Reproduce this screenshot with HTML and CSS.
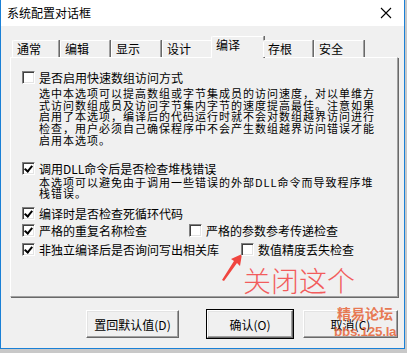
FILE: index.html
```html
<!DOCTYPE html>
<html lang="zh-CN">
<head>
  <meta charset="UTF-8" />
  <title>系统配置对话框</title>
  <link rel="stylesheet" href="styles.css">
</head>
<body>
  <div class="window">
    <div class="titlebar">
      <span class="title">系统配置对话框</span>
      <svg class="close" width="12" height="12" viewBox="0 0 12 12">
        <path d="M1 1 L11 11 M11 1 L1 11" stroke="#000" stroke-width="1.1" fill="none" />
      </svg>
    </div>

    <!-- Tab strip -->
    <div class="tabs">
      <div class="tab first">通常</div>
      <div class="tab">编辑</div>
      <div class="tab">显示</div>
      <div class="tab">设计</div>
      <div class="tab active">编译</div>
      <div class="tab">存根</div>
      <div class="tab">安全</div>
    </div>

    <div class="panel">
      <label class="opt">
        <span class="box"></span>
        <span>是否启用快速数组访问方式</span>
      </label>
      <p class="desc">选中本选项可以提高数组或字节集成员的访问速度，对以单维方<br>式访问数组成员及访问字节集内字节的速度提高最佳。注意如果<br>启用了本选项，编译后的代码运行时就不会对数组越界访问进行<br>检查，用户必须自己确保程序中不会产生数组越界访问错误才能<br>启用本选项。</p>

      <label class="opt opt-2">
        <span class="box checked"></span>
        <span>调用DLL命令后是否检查堆栈错误</span>
      </label>
      <p class="desc desc-2">本选项可以避免由于调用一些错误的外部DLL命令而导致程序堆<br>栈错误。</p>

      <label class="opt opt-3">
        <span class="box checked"></span>
        <span>编译时是否检查死循环代码</span>
      </label>

      <div class="row row-4">
        <label class="opt col-a">
          <span class="box checked"></span>
          <span>严格的重复名称检查</span>
        </label>
        <label class="opt">
          <span class="box"></span>
          <span>严格的参数参考传递检查</span>
        </label>
      </div>

      <div class="row row-5">
        <label class="opt col-b">
          <span class="box checked"></span>
          <span>非独立编译后是否询问写出相关库</span>
        </label>
        <label class="opt">
          <span class="box"></span>
          <span>数值精度丢失检查</span>
        </label>
      </div>
    </div>

    <div class="buttons">
      <button class="btn btn-reset">置回默认值(D)</button>
      <button class="btn btn-ok">确认(O)</button>
      <button class="btn btn-cancel">取消(C)</button>
    </div>

    <!-- screenshot annotation -->
    <svg class="arrow" width="30" height="32" viewBox="0 0 30 32">
      <polygon points="26,1 24,13 21,10 8,28 6,27 18,8 15,6" fill="#f0453f" />
    </svg>
    <div class="note">关闭这个</div>

    <div class="watermark">
      <div class="wm-top">精易论坛</div>
      <div class="wm-bottom">bbs.125.la</div>
    </div>
  </div>
</body>
</html>
```

FILE: styles.css
```css
html, body {
  margin: 0;
  padding: 0;
  background: #c8c8c8;
}
body {
  font-family: "Noto Sans CJK SC", "Liberation Sans", sans-serif;
  font-size: 12px;
  color: #000;
  height: 353px;
  overflow: hidden;
}
.window {
  position: relative;
  width: 403px;
  height: 348px;
  background: #f0f0f0;
  border: 1px solid #1a80d6;
  border-top: none;
}
.titlebar {
  height: 26px;
  background: #fff;
  display: flex;
  align-items: center;
  justify-content: space-between;
  padding: 0 12px 0 6px;
}
.title {
  font-size: 12px;
  line-height: 14px;
}
.close {
  display: block;
}

/* tabs */
.tabs {
  display: flex;
  align-items: flex-end;
  height: 20px;
  margin: 11px 0 0 11px;
  position: relative;
  z-index: 2;
}
.tab {
  width: 44px;
  height: 16px;
  padding-left: 4px;
  line-height: 16px;
  background: #f0f0f0;
  border-top: 1px solid #fff;
  border-left: 1px solid #fff;
  border-right: 1px solid #a0a0a0;
  box-shadow: 1px 0 0 #696969;
  border-top-left-radius: 2px;
  margin-right: 1px;
}
.tab.first {
  width: 41px;
}
.tab.active {
  width: 47px;
  height: 21px;
  line-height: 16px;
  padding-left: 4px;
  margin-bottom: -1px;
  margin-left: -2px;
  margin-right: -1px;
}
.panel {
  position: relative;
  z-index: 1;
  margin-left: 9px;
  height: 240px;
  padding: 13px 0 0 11px;
  box-sizing: border-box;
  width: 388px;
  border-top: 1px solid #fff;
  border-left: 1px solid #fff;
  border-right: 1px solid #a0a0a0;
  border-bottom: 1px solid #a0a0a0;
  box-shadow: 1px 1px 0 #696969;
}

/* options */
.opt {
  display: flex;
  align-items: center;
  gap: 4px;
  height: 13px;
  line-height: 13px;
  white-space: nowrap;
}
.box {
  width: 11px;
  height: 11px;
  background: #fff;
  border: 1px solid;
  border-color: #808080 #fff #fff #808080;
  box-shadow: inset 1px 1px 0 #404040, inset -1px -1px 0 #e3e3e3;
  flex: none;
  position: relative;
}
.box.checked::after {
  content: "";
  position: absolute;
  left: 3px;
  top: 1px;
  width: 3px;
  height: 6px;
  border-right: 2px solid #000;
  border-bottom: 2px solid #000;
  transform: rotate(40deg);
}
.desc {
  margin: 4px 0 0 17px;
  font-size: 11px;
  letter-spacing: 1px;
  line-height: 11.7px;
  white-space: nowrap;
}
.opt-2 {
  margin-top: 15px;
}
.desc-2 {
  margin-top: 2px;
  line-height: 11.5px;
}
.opt-3 {
  margin-top: 7px;
}
.row {
  display: flex;
}
.row-4 {
  margin-top: 4px;
}
.row-5 {
  margin-top: 6px;
}
.col-a {
  width: 167px;
}
.col-b {
  width: 219px;
}

/* buttons */
.buttons {
  display: flex;
  margin: 13px 0 0 85px;
}
.btn {
  height: 28px;
  font-family: "Noto Sans CJK SC", "Liberation Sans", sans-serif;
  font-size: 12px;
  background: #f0f0f0;
  border: 1px solid;
  border-color: #fff #696969 #696969 #fff;
  box-shadow: inset -1px -1px 0 #a0a0a0, inset 1px 1px 0 #e3e3e3;
  padding: 0;
  color: #000;
}
.btn-reset {
  width: 93px;
}
.btn-ok {
  width: 86px;
  margin-left: 28px;
  outline: 1px solid #000;
  outline-offset: 0;
}
.btn-cancel {
  width: 95px;
  margin-left: 10px;
}

/* annotation overlay */
.arrow {
  position: absolute;
  left: 215px;
  top: 253px;
}
.note {
  position: absolute;
  left: 242px;
  top: 262px;
  font-size: 28px;
  line-height: 36px;
  font-weight: 300;
  color: #f25c5c;
}
.watermark {
  position: absolute;
  left: 333px;
  top: 304px;
  width: 62px;
  color: rgba(230, 100, 55, 0.85);
  font-weight: bold;
  text-align: center;
}
.wm-top {
  font-size: 14px;
  line-height: 19px;
}
.wm-bottom {
  font-family: "Liberation Sans", sans-serif;
  font-size: 13.5px;
  line-height: 18px;
  letter-spacing: -0.3px;
}
```
